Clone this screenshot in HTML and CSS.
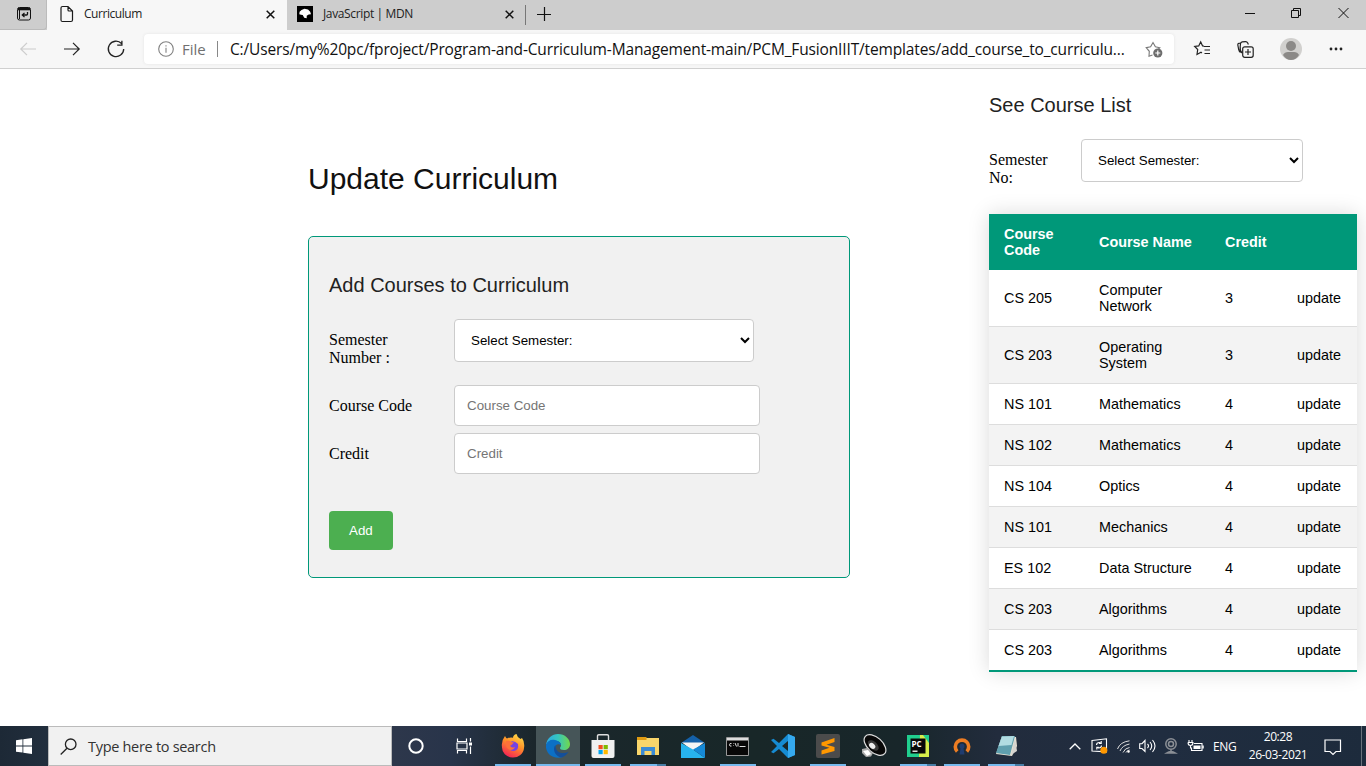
FILE: index.html
```html
<!DOCTYPE html>
<html lang="en">
<head>
<meta charset="utf-8">
<title>Curriculum</title>
<link rel="stylesheet" href="styles.css">
</head>
<body>
<header class="tabs">
  <div class="tab-menu"><svg width="16" height="16" viewBox="0 0 16 16" fill="none" stroke="#111"><rect x="1.500" y="1.500" width="13" height="12.500" rx="2"/><path d="M2 3h12" stroke-width="2.600"/><path d="M3.500 3v10" stroke-width="1"/><path d="M11.500 6v2q0 1-1 1H6.500M8.500 6.900 6.300 9l2.200 2.100" stroke-width="1.300"/></svg></div>
  <div class="tab active">
    <svg width="14" height="18" viewBox="0 0 14 18" fill="none" stroke="#1b1b1b" stroke-width="1.200"><path d="M1 3q0-1.500 1.500-1.500H8l4.500 4.500v9q0 1.500-1.500 1.500H2.500Q1 16.500 1 15zM8 1.500V5q0 1 1 1h3.500"/></svg>
    <span class="tab-title">Curriculum</span>
    <svg class="close" width="9" height="9" viewBox="0 0 9 9" stroke="#111" stroke-width="1.500"><path d="M.7.7l7.600 7.600M8.300.7L.7 8.300"/></svg>
  </div>
  <div class="tab second">
    <svg width="16" height="16" viewBox="0 0 16 16"><path d="M0 0h16v16H0z"/><path d="M2.300 8.300 2.600 5.800 4.500 4l3-1.200 3.500.7 2.200 2.300.8 2.500-2.300.3-2 1.200v2.500l-2.500-.5-1.500-2.800L4 8.800z" fill="#fff"/></svg>
    <span class="tab-title mdn">JavaScript | MDN</span>
    <svg class="close" width="9" height="9" viewBox="0 0 9 9" stroke="#111" stroke-width="1.500"><path d="M.7.7l7.600 7.600M8.300.7L.7 8.300"/></svg>
  </div>
  <svg class="plus" width="14" height="14" viewBox="0 0 14 14" stroke="#111" stroke-width="1.200"><path d="M0 7.500h14M7.500 0v14"/></svg>
  <div class="window-buttons">
    <svg width="10" height="12" viewBox="0 0 10 12" stroke="#111"><path d="M0 6.500h10"/></svg>
    <svg width="11" height="12" viewBox="0 0 11 12" fill="none" stroke="#111"><path d="M.5 3.500h7v7h-7zM2.500 3.500v-2h7v7h-2"/></svg>
    <svg width="11" height="12" viewBox="0 0 11 12" stroke="#111"><path d="M.5 1l10 10M10.500 1l-10 10"/></svg>
  </div>
</header>
<nav class="toolbar">
  <div class="nav-icons">
    <svg width="16" height="14" viewBox="0 0 16 14" fill="none" stroke="#ccc" stroke-width="1.200"><path d="M16 7H1M7 .8.8 7 7 13.200"/></svg>
    <svg width="16" height="14" viewBox="0 0 16 14" fill="none" stroke="#222" stroke-width="1.200"><path d="M0 7h15M9 .8 15.200 7 9 13.200"/></svg>
    <svg width="18" height="18" viewBox="0 0 18 18" fill="none" stroke="#222" stroke-width="1.300"><path d="M16.700 9A7.700 7.700 0 1 1 14.500 3.500M14.900.8v4.400h-4.700"/></svg>
  </div>
  <div class="address">
    <svg width="16" height="16" viewBox="0 0 16 16" fill="none" stroke="#808080" stroke-width="1.100"><circle cx="8" cy="8" r="7.300"/><path d="M8 6.800v5M8 4.300v1.300"/></svg>
    <span class="scheme">File</span>
    <span class="url">C:/Users/my%20pc/fproject/Program-and-Curriculum-Management-main/PCM_FusionIIIT/templates/add_course_to_curriculu...</span>
    <svg class="fav" width="18" height="17" viewBox="0 0 18 17"><path d="M7.500 14.100 4 15.300l.3-5L1.200 6.700l4.400-1L8 1.500l2.400 4.200 4.400 1-2 2" fill="none" stroke="#777" stroke-width="1.100"/><circle cx="12.800" cy="12" r="4.600" fill="#6d6d6d"/><path d="M12.800 9.500v5M10.300 12h5" stroke="#fff" stroke-width="1.200"/></svg>
  </div>
  <div class="tool-icons">
    <svg width="17" height="16" viewBox="0 0 17 16" fill="none" stroke="#222" stroke-width="1.200"><path d="M10 5.200 8.600 5 6.700.9l-2 4-4 .6 3 3-.7 5 4-2.200 1 .6M10 5.500h6M10.500 9H16M10.500 12.500H16"/></svg>
    <svg width="17" height="17" viewBox="0 0 17 17" fill="none" stroke="#222" stroke-width="1.200"><path d="M3.500 11.500Q2.200 10.500 1.700 8.500L.8 3.800Q.6 2.600 1.800 2.300L3.500 2M5 12Q2.700 9.500 3.200 5.500L3.500 2.700Q3.700 1 5.200.8L8.500.600q1.500-.1 2.200 1.400l.7 1.500"/><rect x="5.700" y="5.800" width="10.500" height="10.500" rx="2"/><path d="M11 8v6M8 11h6"/></svg>
    <svg width="22" height="22" viewBox="0 0 22 22"><circle cx="11" cy="11" r="11" fill="#d1d0ce"/><circle cx="11" cy="8" r="5" fill="#8b8987"/><path d="M3 17q1.500-3 5-3h6q3.500 0 5 3-3 5-8 5t-8-5" fill="#8b8987"/></svg>
    <svg width="14" height="4" viewBox="0 0 14 4" fill="#222"><circle cx="2" cy="2" r="1.400"/><circle cx="7" cy="2" r="1.400"/><circle cx="12" cy="2" r="1.400"/></svg>
  </div>
</nav>
<main class="page">
  <section class="main-col">
    <h2 class="title">Update Curriculum</h2>
    <form class="card">
      <h4 class="subtitle">Add Courses to Curriculum</h4>
      <div class="row row-select"><label class="label">Semester Number :</label><select class="select"><option>Select Semester:</option></select></div>
      <div class="row"><label class="label">Course Code</label><input class="input" placeholder="Course Code"></div>
      <div class="row"><label class="label">Credit</label><input class="input" placeholder="Credit"></div>
      <button class="add" type="button">Add</button>
    </form>
  </section>
  <aside class="side-col">
    <h4 class="subtitle">See Course List</h4>
    <div class="row side-row"><label class="label">Semester No:</label><select class="select"><option>Select Semester:</option></select></div>
    <table class="courses">
      <colgroup><col class="c1"><col class="c2"><col class="c3"><col class="c4"></colgroup>
      <thead><tr><th>Course Code</th><th>Course Name</th><th>Credit</th><th></th></tr></thead>
      <tbody>
        <tr><td>CS 205</td><td>Computer Network</td><td>3</td><td>update</td></tr>
        <tr><td>CS 203</td><td>Operating System</td><td>3</td><td>update</td></tr>
        <tr><td>NS 101</td><td>Mathematics</td><td>4</td><td>update</td></tr>
        <tr><td>NS 102</td><td>Mathematics</td><td>4</td><td>update</td></tr>
        <tr><td>NS 104</td><td>Optics</td><td>4</td><td>update</td></tr>
        <tr><td>NS 101</td><td>Mechanics</td><td>4</td><td>update</td></tr>
        <tr><td>ES 102</td><td>Data Structure</td><td>4</td><td>update</td></tr>
        <tr><td>CS 203</td><td>Algorithms</td><td>4</td><td>update</td></tr>
        <tr><td>CS 203</td><td>Algorithms</td><td>4</td><td>update</td></tr>
      </tbody>
    </table>
  </aside>
</main>
<footer class="taskbar">
  <div class="cell wide"><svg width="16" height="16" viewBox="0 0 16 16" fill="#fff"><path d="M0 2.300 6.500 1.300V7.500H0zM7.300 1.200 16 0v7.500H7.300zM0 8.400h6.500v6.200L0 13.700zM7.300 8.400H16V16l-8.700-1.200z"/></svg></div>
  <div class="search">
    <svg width="17" height="17" viewBox="0 0 17 17" fill="none" stroke="#222" stroke-width="1.300"><circle cx="10.700" cy="6.300" r="5.300"/><path d="M7 10.200.7 16.500"/></svg>
    <span>Type here to search</span>
  </div>
  <div class="cell wide"><svg width="16" height="16" viewBox="0 0 16 16"><circle cx="8" cy="8" r="6.700" fill="none" stroke="#fff" stroke-width="2"/></svg></div>
  <div class="cell wide"><svg width="17" height="16" viewBox="0 0 17 16" fill="none" stroke="#fff" stroke-width="1.200"><path d="M1.500 .5v3h9v-3M1.500 15.500v-3h9v3M1 5h10v6H1zM14.500 0v3.500M14.500 8.500V16"/><path d="M13 4.500h3v3h-3z" fill="#fff" stroke="none"/></svg></div>
  <div class="apps">
    <div class="cell run"><svg width="24" height="24" viewBox="0 0 24 24"><defs><linearGradient id="ff" x1=".8" y1="0" x2=".3" y2="1"><stop stop-color="#ffe14a"/><stop offset=".45" stop-color="#ff9028"/><stop offset="1" stop-color="#f52156"/></linearGradient></defs><path d="M1 13Q0 7 4 2q1 2 2 2.500 3-1.500 6-.8Q12 1 15.500 0q.5 3 4 5l1.500-1q3 4 2 10a11 10 0 0 1-22-1" fill="url(#ff)"/><path d="M8 9q4-4 9 1 1 6-4 7-5 0-6-5l4-1z" fill="#7542e5"/><path d="M5 7q4-1 5 1l3 .5-2 2-2 1q1 3 5 1.500-1 3-5 3-4-2-4-5z" fill="#ff7139"/></svg></div>
    <div class="cell run current"><svg width="24" height="24" viewBox="0 0 24 24"><defs><linearGradient id="ed"><stop stop-color="#2daae5"/><stop offset=".5" stop-color="#36c6bd"/><stop offset="1" stop-color="#72d84a"/></linearGradient></defs><path d="M0 11C1 4 6 0 12 0c7 0 12 5 12 10 0 4-3 6-6 6s-4-1-4-2c0-1 1-1 1-3 0-2-2-4-5-4-5 0-9 2-10 4" fill="url(#ed)"/><path d="M0 11c1-4 5-6 9-5 3 .5 6 2.500 6 5-4-2-6 1-6 3 0 5 4 8 8 9C8 26-1 20 0 11" fill="#0c70c5"/><path d="M9.500 11C6 15 9 22 15 23.500c3-.5 6-3 7.500-5.500C17 20.500 9 19 9.500 11" fill="#144f9a"/></svg></div>
    <div class="cell run"><svg width="24" height="24" viewBox="0 0 24 24"><path d="M6.500 7V2q0-1.300 1.300-1.300h8.400Q17.500 .7 17.500 2v5" fill="none" stroke="#ddd" stroke-width="1.400"/><path d="M.5 6h23v16q0 2-2 2h-19q-2 0-2-2z" fill="#f1f1f1"/><path d="M7.500 11h4.200v4.200H7.500z" fill="#f25022"/><path d="M12.600 11h4.200v4.200h-4.200z" fill="#7fba00"/><path d="M7.500 16h4.200v4.200H7.500z" fill="#00a4ef"/><path d="M12.600 16h4.200v4.200h-4.200z" fill="#ffb900"/></svg></div>
    <div class="cell run multi"><svg width="22" height="20" viewBox="0 0 22 20"><path d="M0 2h22v17H0z" fill="#f9d66b"/><path d="M0 1h9.500v3H0z" fill="#df9b12"/><path d="M4 11h14v8h-3.500v-4h-7v4H4z" fill="#3b8bd4"/></svg></div>
    <div class="cell"><svg width="24" height="23" viewBox="0 0 24 23"><path d="M0 8 12 0l12 8z" fill="#1460a8"/><path d="M1 7.500h22L12 16z" fill="#f5f5f5"/><path d="M0 8l12 6.500L24 23H0z" fill="#27b4ee"/><path d="M24 8v15L12 14.500z" fill="#1689d6"/></svg></div>
    <div class="cell run"><svg width="23" height="19" viewBox="0 0 23 19"><path d="M.5.500h22v18H.500z" fill="#080808" stroke="#999"/><path d="M1 1h21v2.500H1z" fill="#ddd"/><path d="M5.500 6.500q-2-.5-2 1.300t2 1.300M7.500 6.500v.5m0 1.500V9M9 6l1.500 3.500M12 6v3.500M13.500 9.500h6" fill="none" stroke="#ddd"/></svg></div>
    <div class="cell"><svg width="24" height="24" viewBox="0 0 24 24"><path d="m17 0 7 3v18l-7 3-9-9-5.500 4.200L0 18l6-6-6-6 2.500-1.200L8 9zm0 7-6 5 6 5z" fill="#168bd2"/><path d="m17 0 7 3v18l-7 3z" fill="#35a9ee"/></svg></div>
    <div class="cell run"><svg width="24" height="24" viewBox="0 0 24 24"><rect width="24" height="24" rx="2" fill="#4b4b4b"/><path d="m5.500 8.500 13-4.500v4l-8 2.800 8 2.200v4L5.500 20.500v-4l8-2.800-8-2.200z" fill="#ff9800"/></svg></div>
    <div class="cell"><svg width="24" height="24" viewBox="0 0 24 24"><g transform="rotate(42 14 11)"><ellipse cx="14" cy="11" rx="13" ry="7.500" fill="#080808" stroke="#ddd" stroke-width="1.200"/><ellipse cx="13" cy="12.500" rx="6.500" ry="3.800" fill="#3a3a3a"/><ellipse cx="12.500" cy="13.500" rx="3.500" ry="2.500" fill="#eee"/></g><path d="m1 15 5-1 6 5-2 3.500-5 .5-4-4z" fill="#aaa"/><path d="m2 17 5-1 3 4-4 2z" fill="#fff"/></svg></div>
    <div class="cell run multi"><svg width="22" height="22" viewBox="0 0 22 22"><path d="M0 0h22v22H0z" fill="#20cf8e"/><path d="M13 0h3l6 8v14H12z" fill="#d7ee4b"/><path d="M3.500 3.500h15v15h-15z" fill="#080808"/><path d="M5.500 16.200h5" stroke="#fff" stroke-width="1.300"/><text x="4.500" y="12" class="pc">PC</text></svg></div>
    <div class="cell narrow run"><svg width="18" height="18" viewBox="0 0 18 18"><path d="M4.200 14.500a6.700 6.700 0 1 1 9.600 0" fill="none" stroke="#ed7d23" stroke-width="3.600"/><path d="M9 6.500a2.800 2.800 0 0 1 1.500 5l1 6h-5l1-6A2.800 2.800 0 0 1 9 6.500" fill="#203c6e"/></svg></div>
    <div class="cell narrow run multi"><svg width="23" height="22" viewBox="0 0 23 22"><path d="m7 1 14 1 1 9-5 10-16-2z" fill="#e8e3d5"/><path d="M7 1h13l-5 19-14-2z" fill="#5f9fae"/><path d="m7 1.500 12-.5-2.500 9-13 1z" fill="#b1dce2"/><path d="m20 3 2 13-6 4z" fill="#d6d4cf"/></svg></div>
  </div>
  <div class="tray">
    <div><svg width="12" height="7" viewBox="0 0 12 7" fill="none" stroke="#fff" stroke-width="1.300"><path d="m.7 6.300 5.300-5.300 5.300 5.300"/></svg></div>
    <div><svg width="17" height="16" viewBox="0 0 17 16" fill="none" stroke="#fff" stroke-width="1.100"><path d="M1 2.500 15.500.8v13L1 13zM5.500 7q0-2.500 3-2.500l1.500 1M10.200 3v2.500H8M10.500 7.500q0 2.500-3 2.500L6 9.200M5.800 11.500V9.200h2"/><circle cx="12.800" cy="12.300" r="3.500" fill="#ff9800" stroke="none"/></svg></div>
    <div><svg width="13" height="13" viewBox="0 0 13 13" fill="none" stroke="#ddd"><path d="M.5 9Q3 2 12.500.8M3 11Q5 5.500 12.500 4M6 12.500q2-4.500 6.500-5M9 12.500q1-2 3.500-2.500"/><circle cx="11.500" cy="11.500" r="1" fill="#fff"/></svg></div>
    <div><svg width="17" height="14" viewBox="0 0 17 14" fill="none" stroke="#fff" stroke-width="1.100"><path d="M.7 4.700H3L6 1.500v11L3 9.500H.7zM8.500 5q2 2 0 4M11 3q3.500 4 0 8M13.500 1q5 6 0 12"/></svg></div>
    <div><svg width="14" height="16" viewBox="0 0 14 16" fill="none" stroke="#8b8f95" stroke-width="1.500"><circle cx="7" cy="6" r="5.200"/><circle cx="7" cy="6" r="2.500"/><path d="M7 11.500v2M2.500 15q4.500-3 9 0z"/></svg></div>
    <div><svg width="17" height="13" viewBox="0 0 17 13"><path d="M7 3.500h8v7H4.500v-3M16.200 5.500v3M2 0v2.500M5 0v2.500M1 2.500h5q0 3-2.500 3T1 2.500M3.500 5.500v3" fill="none" stroke="#fff" stroke-width="1.100"/><path d="M6.500 5.500h7v3.500h-7z" fill="#fff"/></svg></div>
    <span class="lang">ENG</span>
    <div class="clock"><span>20:28</span><span class="date">26-03-2021</span></div>
    <svg class="note" width="18" height="16" viewBox="0 0 18 16" fill="none" stroke="#fff" stroke-width="1.200"><path d="M1 1h15.500v11.500H12l-3 3-3-3H1z"/></svg>
  </div>
</footer>
</body>
</html>
```
FILE: styles.css
```css
* { box-sizing: border-box; }
body { margin: 0; width: 1366px; height: 766px; overflow: hidden; display: flex; flex-direction: column; background: #fff; font-family: "Open Sans", "Noto Sans", sans-serif; }
svg { display: block; flex: none; overflow: visible; }

.tabs { height: 30px; flex: none; display: flex; align-items: center; background: #cdcdcd; color: #222; }
.tab-menu { width: 47px; height: 30px; padding: 6px 0 0 16px; background: #cdcdcd; border-bottom: 1px solid #bbb; border-right: 1px solid #bbb; border-radius: 0 0 4px 0; }
.tab { height: 30px; display: flex; align-items: center; padding-bottom: 2px; }
.active { width: 240px; padding-left: 13px; background: #f7f7f7; }
.second { width: 239px; padding-left: 10px; background: linear-gradient(#777, #777) right 5px / 1px 20px no-repeat; }
.tab-title { margin: -1px 0 0 10px; font-size: 12px; letter-spacing: -0.45px; white-space: nowrap; }
.mdn { letter-spacing: -0.36px; }
.close { margin: 1px 12px 0 auto; }
.plus { margin: 0 0 3px 11px; }
.window-buttons { display: flex; gap: 36px; margin: 0 17px 5px auto; align-items: center; }

.toolbar { height: 39px; flex: none; display: flex; align-items: center; background: #f7f7f7; border-bottom: 1px solid #d0d0d0; }
.nav-icons { width: 144px; padding-left: 20px; display: flex; align-items: center; gap: 28px; }
.nav-icons svg:last-child { margin-left: -1px; }
.address { width: 1030px; height: 30px; display: flex; align-items: center; padding-left: 14px; background: #fff; border-radius: 4px; box-shadow: 0 0 3px #e2e2e2; font-size: 15px; white-space: nowrap; color: #111; }
.scheme { width: 36px; margin-left: 8px; color: #707070; letter-spacing: 0; border-right: 1px solid #888; line-height: 16px; }
.url { width: 895px; margin-left: 12px; font-size: 15.5px; letter-spacing: -0.15px; }
.fav { margin: 1px 0 0 20px; }
.tool-icons { display: flex; align-items: center; gap: 26px; margin-left: 20px; }
.tool-icons svg:last-child { margin-left: 1px; }

.page { height: 657px; flex: none; display: flex; padding-left: 308px; font-family: "Liberation Serif", serif; }
.main-col { width: 542px; padding-top: 92px; }
.side-col { width: 368px; margin-left: 139px; padding-top: 24px; }
.title, .subtitle { margin: 0; font-family: "Liberation Sans", sans-serif; font-weight: 400; color: #111; }
.title { font-size: 30px; line-height: 36px; }
.subtitle { font-size: 20px; line-height: 24px; color: #222; }
.card { height: 342px; margin-top: 39px; padding: 36px 20px 0; background: #f1f1f1; border: 1px solid #009879; border-radius: 5px; }
.row { height: 48px; display: flex; align-items: flex-start; font-size: 16px; line-height: 18px; color: #000; }
.row-select { height: 66px; margin-top: 22px; }
.label { width: 125px; padding: 12px 36px 0 0; }
.select, .input { border: 1px solid #ccc; border-radius: 4px; background: #fff; font: 13.333px "Liberation Sans", sans-serif; }
.select { width: 300px; height: 43px; padding: 12px; color: #000; }
.input { width: 306px; height: 41px; padding: 12px; outline: 0; }
.input::placeholder { color: #757575; }
.add { display: block; height: 39px; margin-top: 30px; padding: 12px 20px; border: 0; border-radius: 4px; color: #fff; background: #4caf50; font: 13.333px/15px "Liberation Sans", sans-serif; }
.side-row { height: 75px; margin-top: 22px; }
.side-row .label { width: 92px; padding-right: 20px; }
.side-row .select { width: 222px; }
.courses { width: 368px; table-layout: fixed; border-collapse: separate; border-spacing: 0; font: 14.4px/16px "Liberation Sans", sans-serif; color: #000; box-shadow: 0 0 20px rgba(0, 0, 0, .15); }
.courses th { height: 56px; padding: 12px 15px; text-align: left; color: #fff; background: #009879; }
.courses td { padding: 12px 15px; background: #fff; border-bottom: 1px solid #ddd; }
.courses tr:nth-child(even) td { background: #f3f3f3; }
.courses tr:last-child td { border-bottom: 2px solid #009879; }
.c1 { width: 95px; }
.c2 { width: 126px; }
.c3 { width: 72px; }
.c4 { width: 75px; }

.taskbar { height: 40px; flex: none; display: flex; background: linear-gradient(90deg, #1d2936 0, #222f3e 4%, #2d374b 29%, #28344a 33%, #1b272c 39%, #182728 55%, #18262a 66%, #222c3d 73%, #202d40 85%, #1d2b3c); }
.cell { width: 45px; height: 40px; display: flex; align-items: center; justify-content: center; }
.wide { width: 48px; }
.narrow { width: 44px; }
.search { width: 344px; display: flex; align-items: center; background: #f1f1f1; border: 1px solid #bbb; padding-left: 11px; font-size: 14.5px; color: #333; }
.search span { margin-left: 11px; letter-spacing: -0.3px; }
.apps { width: 538px; display: flex; margin-left: 2px; }
.run { background: linear-gradient(#76b9ed, #76b9ed) center bottom / 36px 2px no-repeat; }
.current { width: 44px; margin: 0 0 0 1px; background: linear-gradient(#76b9ed, #76b9ed) bottom / 100% 2px no-repeat, #465558; }
.multi { background: linear-gradient(90deg, #76b9ed 27px, #477da5 27px) center bottom / 36px 2px no-repeat; }
.pc { font: bold 8px "Open Sans", sans-serif; fill: #fff; }
.tray { flex: 1; display: flex; align-items: center; padding-left: 35px; color: #fff; font-size: 12px; background: linear-gradient(#69717b, #69717b) 333px 0 / 1px 100% no-repeat; }
.tray > div:not(.clock) { width: 24px; display: flex; justify-content: center; }
.lang { width: 32px; margin-left: 6px; letter-spacing: -0.4px; }
.clock { width: 66px; margin-left: 0; display: flex; flex-direction: column; align-items: center; line-height: 18px; letter-spacing: -0.4px; }
.date { white-space: nowrap; }
.note { margin: 1px 0 0 13px; }
```
